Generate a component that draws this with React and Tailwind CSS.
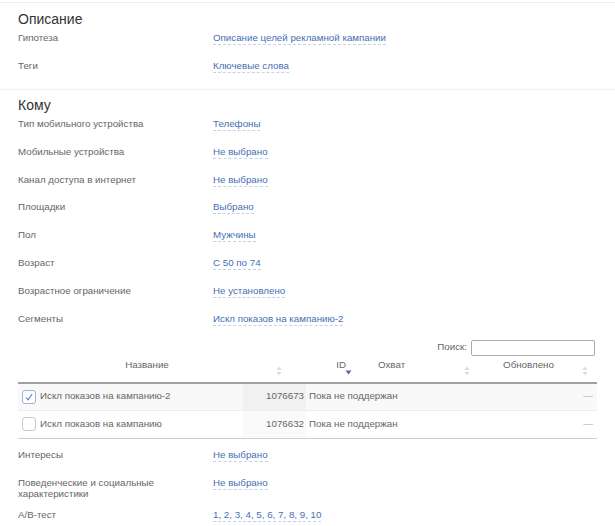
import React from "react";

const Row = ({ label, value, className = "" }) => (
  <div className={`flex items-start leading-[14px] ${className}`}>
    <div className="w-[195px] shrink-0 text-[#666]">{label}</div>
    <a className="text-[#4570b5] border-b border-dashed border-[#c3d2ea] leading-[13px] cursor-pointer">
      {value}
    </a>
  </div>
);

const SortBoth = () => (
  <svg width="6" height="10" viewBox="0 0 6 10" className="shrink-0">
    <path d="M3 0.5 L5.5 4 L0.5 4 Z" fill="#dcdcdc" />
    <path d="M3 9.5 L5.5 6 L0.5 6 Z" fill="#dcdcdc" />
  </svg>
);

const SortDown = () => (
  <svg width="7" height="5" viewBox="0 0 7 5" className="shrink-0">
    <path d="M0.5 0.5 L6.5 0.5 L3.5 4.5 Z" fill="#5866b8" />
  </svg>
);

const Checkbox = ({ checked }) => (
  <span
    className={`w-[14px] h-[14px] rounded-[3px] border flex items-center justify-center shrink-0 bg-white ${
      checked ? "border-[#9db3d6]" : "border-[#c8c8c8]"
    }`}
  >
    {checked && (
      <svg width="10" height="10" viewBox="0 0 10 10">
        <path d="M2 5.5 L4 7.8 L8.2 2" fill="none" stroke="#5a7fc0" strokeWidth="1.1" />
      </svg>
    )}
  </span>
);

const segments = [
  { name: "Искл показов на кампанию-2", id: "1076673", reach: "Пока не поддержан", checked: true },
  { name: "Искл показов на кампанию", id: "1076632", reach: "Пока не поддержан", checked: false },
];

export default function App() {
  return (
    <div className="w-full min-h-screen bg-white text-[9.75px] font-['Liberation_Sans',Arial,sans-serif] text-[#666]">
      <div className="h-[2px]" />
      <div className="border-t border-[#f0f0f0]" />

      {/* ОПИСАНИЕ */}
      <div className="px-[18px] pt-[7px] pb-[16px]">
        <h2 className="text-[14px] leading-[18px] text-[#333] mb-[3px]">Описание</h2>
        <div className="flex flex-col gap-[14px]">
          <Row label="Гипотеза" value="Описание целей рекламной кампании" />
          <Row label="Теги" value="Ключевые слова" />
        </div>
      </div>

      <div className="border-t border-[#f2f2f2]" />

      {/* КОМУ */}
      <div className="px-[18px] pt-[6px]">
        <h2 className="text-[14px] leading-[18px] text-[#333] mb-[3px]">Кому</h2>
        <div className="flex flex-col gap-[13.8px]">
          <Row label="Тип мобильного устройства" value="Телефоны" />
          <Row label="Мобильные устройства" value="Не выбрано" />
          <Row label="Канал доступа в интернет" value="Не выбрано" />
          <Row label="Площадки" value="Выбрано" />
          <Row label="Пол" value="Мужчины" />
          <Row label="Возраст" value="С 50 по 74" />
          <Row label="Возрастное ограничение" value="Не установлено" />
          <Row label="Сегменты" value="Искл показов на кампанию-2" />
        </div>

        {/* Search */}
        <div className="flex justify-end items-center mt-[14px] pr-[2px]">
          <span className="mr-[4px]">Поиск:</span>
          <input className="w-[124px] h-[16px] border border-[#aaa] rounded-[2px] outline-none bg-white" />
        </div>

        {/* Table header */}
        <div className="flex h-[28px] border-b-2 border-[#a0a0a0]">
          <div className="w-[272px] flex items-start pt-[2px] pr-[8px]">
            <span className="flex-1 text-center leading-[14px]">Название</span>
            <span className="mt-[8px]"><SortBoth /></span>
          </div>
          <div className="w-[65px] flex items-start justify-end pt-[2px] pr-[3px]">
            <span className="leading-[14px]">ID</span>
            <span className="mt-[12px] -ml-[1px]"><SortDown /></span>
          </div>
          <div className="w-[120px] flex items-start pt-[2px] pr-[5px]">
            <span className="pl-[23px] flex-1 leading-[14px]">Охват</span>
            <span className="mt-[8px]"><SortBoth /></span>
          </div>
          <div className="flex-1 flex items-start pt-[2px] pr-[9px]">
            <span className="flex-1 text-center leading-[14px]">Обновлено</span>
            <span className="mt-[8px]"><SortBoth /></span>
          </div>
        </div>

        {/* Table body */}
        <div className="border-b border-[#cfcfcf]">
          {segments.map((s, i) => (
            <div
              key={s.id}
              className={`flex h-[27px] items-center ${
                i === 0 ? "bg-[#f9f9f9] border-b border-[#ececec]" : "bg-white"
              }`}
            >
              <div className="w-[225px] flex items-center gap-[4px] pl-[4px] h-full">
                <Checkbox checked={s.checked} />
                <span>{s.name}</span>
              </div>
              <div
                className={`w-[63px] h-full flex items-center justify-end pr-[2px] ${
                  i === 0 ? "bg-[#f1f1f1]" : "bg-[#fafafa]"
                }`}
              >
                {s.id}
              </div>
              <div className="flex-1 pl-[3px]">{s.reach}</div>
              <div className="pr-[4px] text-[#aaa]">—</div>
            </div>
          ))}
        </div>

        <div className="flex flex-col pt-[9px]">
          <Row label="Интересы" value="Не выбрано" />
          <div className="flex items-start mt-[14px]">
            <div className="w-[195px] shrink-0 leading-[11px] pt-[1px] pr-[50px]">
              Поведенческие и социальные характеристики
            </div>
            <a className="text-[#4570b5] border-b border-dashed border-[#c3d2ea] leading-[13px]">
              Не выбрано
            </a>
          </div>
          <Row label="А/В-тест" value="1, 2, 3, 4, 5, 6, 7, 8, 9, 10" className="mt-[9px]" />
        </div>
      </div>
    </div>
  );
}
